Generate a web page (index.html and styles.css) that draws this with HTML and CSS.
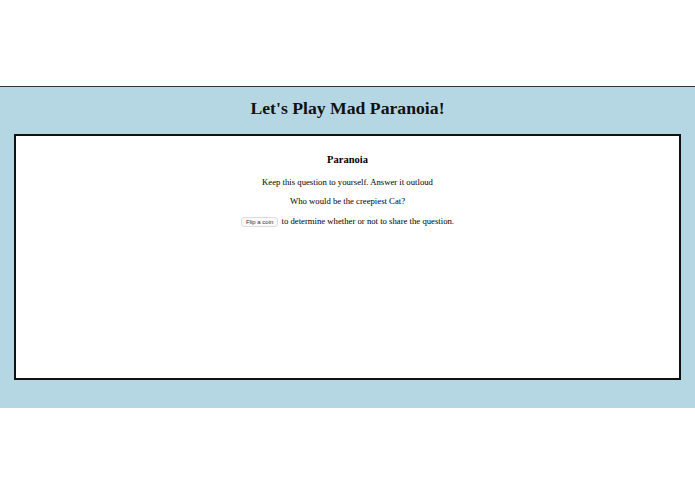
FILE: index.html
```html
<!DOCTYPE html>
<html lang="en">
<head>
    <meta charset="UTF-8">
    <meta name="viewport" content="width=device-width, initial-scale=1.0">
    <title>Mad Paranoia</title>
    <link rel="stylesheet" href="styles.css">
</head>
<body>

    <!-- Game area -->
    <div class="game">
        <h1>Let's Play Mad Paranoia!</h1>

        <div class="card">
            <h3>Paranoia</h3>
            <p>Keep this question to yourself. Answer it outloud</p>
            <p>Who would be the creepiest Cat?</p>
            <p><button class="btn" id="flipBtn">Flip a coin</button> to determine whether or not to share the question.</p>
        </div>
    </div>

</body>
</html>
```

FILE: styles.css
```css
/* Page */
body {
    margin: 0;
    font-family: 'Liberation Serif', 'Times New Roman', serif;
    color: #000;
    background-color: #fff;
}

.game {
    margin-top: 86px;
    border-top: 1px solid #333;
    background-color: #b5d7e3; /* Light blue */
    padding: 0 14px 28px;
}

h1 {
    margin: 0;
    padding: 9px 0 14px;
    font-size: 17.7px;
    line-height: 24px;
    text-align: center;
    color: #111;
}

/* Question card */
.card {
    background-color: #fff;
    border: 2px solid #111;
    height: 242px;
    text-align: center;
    font-size: 8.7px;
}

.card h3 {
    margin: 0;
    padding-top: 17px;
    font-size: 10.5px;
    line-height: 14px;
}

.card p {
    margin: 9.5px 0 0;
    line-height: 10px;
}

.btn {
    font-family: 'Liberation Sans', Arial, sans-serif;
    font-size: 6px;
    color: #333;
    background-color: #fafafa;
    border: 1px solid #ddd;
    border-radius: 3px;
    padding: 1px 4px;
    margin-right: 1px;
}
```
